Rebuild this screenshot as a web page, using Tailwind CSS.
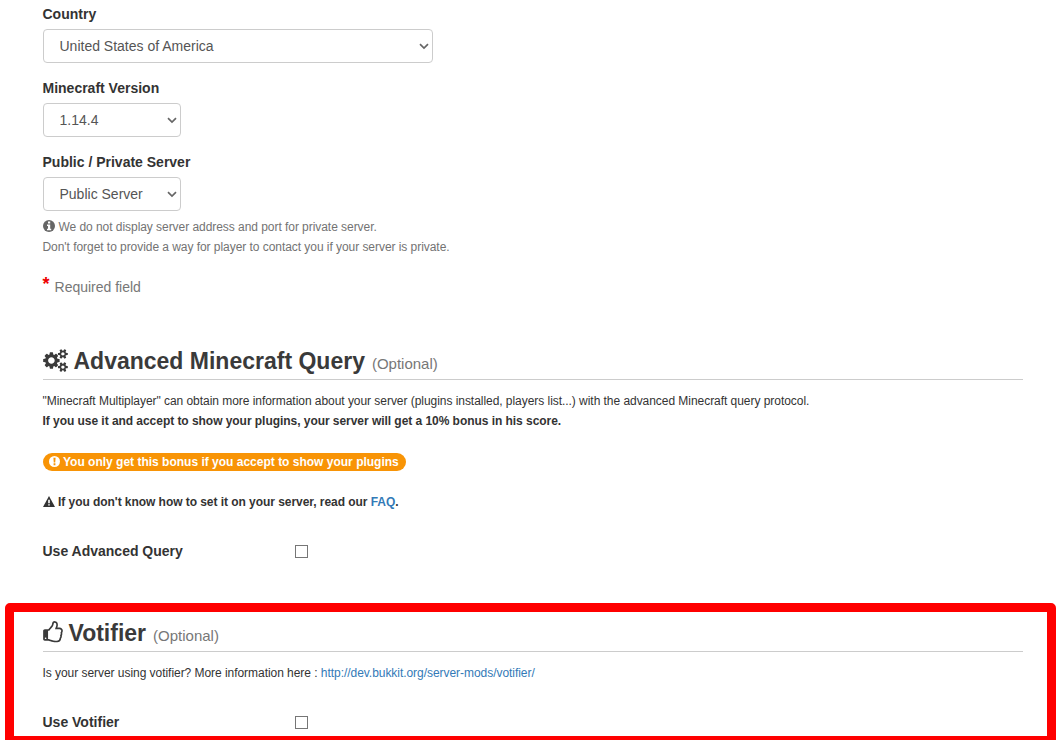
<!DOCTYPE html>
<html lang="en">
<head>
  <meta charset="UTF-8">
  <meta name="viewport" content="width=device-width, initial-scale=1.0">
  <title>Add Server</title>
  <script src="https://cdn.jsdelivr.net/npm/@tailwindcss/browser@4"></script>
</head>
<body class="bg-white text-[#333] h-screen overflow-hidden font-['Liberation_Sans',Arial,sans-serif] text-sm leading-5">

  <form class="pt-1 pl-[42.5px] pr-[37px] h-[603px]">
    <div class="mb-[15px]">
      <label for="country" class="block mb-[5px] font-bold"><span>Country</span></label>
      <div class="relative w-[390px]">
        <select id="country" class="appearance-none block w-full h-[34px] px-4 bg-white border border-[#ccc] rounded text-[#555]">
          <option>United States of America</option>
        </select>
        <svg class="absolute right-1 top-[14px] w-[10px] h-[7px] pointer-events-none" viewBox="0 0 10 7" fill="none" stroke="#666" stroke-width="1.7"><path d="M1 1.2l4 3.8 4-3.8"/></svg>
      </div>
    </div>

    <div class="mb-[15px]">
      <label for="version" class="block mb-[5px] font-bold"><span>Minecraft Version</span></label>
      <div class="relative w-[138px]">
        <select id="version" class="appearance-none block w-full h-[34px] px-4 bg-white border border-[#ccc] rounded text-[#555]">
          <option>1.14.4</option>
        </select>
        <svg class="absolute right-1 top-[14px] w-[10px] h-[7px] pointer-events-none" viewBox="0 0 10 7" fill="none" stroke="#666" stroke-width="1.7"><path d="M1 1.2l4 3.8 4-3.8"/></svg>
      </div>
    </div>

    <div>
      <label for="access" class="block mb-[5px] font-bold"><span>Public / Private Server</span></label>
      <div class="relative w-[138px]">
        <select id="access" class="appearance-none block w-full h-[34px] px-4 bg-white border border-[#ccc] rounded text-[#555]">
          <option>Public Server</option>
        </select>
        <svg class="absolute right-1 top-[14px] w-[10px] h-[7px] pointer-events-none" viewBox="0 0 10 7" fill="none" stroke="#666" stroke-width="1.7"><path d="M1 1.2l4 3.8 4-3.8"/></svg>
      </div>
      <div class="mt-[6px] text-xs leading-5 tracking-[-0.05px] text-[#737373]">
        <p class="flex items-center gap-1">
          <svg class="w-3 h-3 -mt-0.5" viewBox="0 0 12 12"><circle cx="6" cy="6" r="6" fill="#666"/><path d="M5 1.5h2.2v2H5zM4 4.6h3.2v4.2h1v1.4H4V8.8h1V6H4z" fill="#fff"/></svg>
          <span>We do not display server address and port for private server.</span>
        </p>
        <p><span>Don't forget to provide a way for player to contact you if your server is private.</span></p>
      </div>
    </div>

    <p class="mt-5 flex text-[#777]"><span class="mr-[5px] -mt-[3px] text-lg leading-5 font-bold text-[#e00]">*</span><span>Required field</span></p>

    <h2 class="mt-[46px] flex items-center h-[37px] border-b border-[#ccc] text-[23px] leading-9 font-bold text-[#3a3a3a]">
      <svg class="w-[25px] h-[23px] mr-[6px] -mt-0.5" viewBox="0 0 1920 1792" fill="currentColor"><path d="M896 896q0-106-75-181t-181-75-181 75-75 181 75 181 181 75 181-75 75-181zm768 512q0-52-38-90t-90-38-90 38-38 90q0 53 37.5 90.5t90.5 37.5 90.5-37.5 37.5-90.5zm0-1024q0-52-38-90t-90-38-90 38-38 90q0 53 37.5 90.5t90.5 37.5 90.5-37.5 37.5-90.5zm-384 421v185q0 10-7 19.5t-16 10.5l-155 24q-11 35-32 76 34 48 90 115 7 10 7 20 0 12-7 19-23 30-82.5 89.5t-78.5 59.5q-11 0-21-7l-115-90q-37 19-77 31-11 108-23 155-7 24-30 24h-186q-11 0-20-7.5t-10-17.5l-23-153q-34-10-75-31l-118 89q-7 7-20 7-11 0-21-8-144-133-144-160 0-9 7-19 10-14 41-53t47-61q-23-44-35-82l-152-24q-10-1-17-9.5t-7-19.5v-185q0-10 7-19.5t16-10.5l155-24q11-35 32-76-34-48-90-115-7-11-7-20 0-12 7-20 22-30 82-89t79-59q11 0 21 7l115 90q34-18 77-32 11-108 23-154 7-24 30-24h186q11 0 20 7.5t10 17.5l23 153q34 10 75 31l118-89q8-7 20-7 11 0 21 8 144 133 144 160 0 9-7 19-12 16-42 54t-45 60q23 48 34 82l152 23q10 2 17 10.5t7 19.5zm640 533v140q0 16-149 31-12 27-30 52 51 113 51 138 0 4-4 7-122 71-124 71-8 0-46-47t-52-68q-20 2-30 2t-30-2q-14 21-52 68t-46 47q-2 0-124-71-4-3-4-7 0-25 51-138-18-25-30-52-149-15-149-31v-140q0-16 149-31 13-29 30-52-51-113-51-138 0-4 4-7 4-2 35-20t59-34 30-16q8 0 46 46.5t52 67.5q20-2 30-2t30 2q51-71 92-112l6-2q4 0 124 70 4 3 4 7 0 25-51 138 17 23 30 52 149 15 149 31zm0-1024v140q0 16-149 31-12 27-30 52 51 113 51 138 0 4-4 7-122 71-124 71-8 0-46-47t-52-68q-20 2-30 2t-30-2q-14 21-52 68t-46 47q-2 0-124-71-4-3-4-7 0-25 51-138-18-25-30-52-149-15-149-31v-140q0-16 149-31 13-29 30-52-51-113-51-138 0-4 4-7 4-2 35-20t59-34 30-16q8 0 46 46.5t52 67.5q20-2 30-2t30 2q51-71 92-112l6-2q4 0 124 70 4 3 4 7 0 25-51 138 17 23 30 52 149 15 149 31z"/></svg>
      <span>Advanced Minecraft Query</span>
      <small class="ml-[7px] mt-1.5 text-[15px] font-normal text-[#777]">(Optional)</small>
    </h2>

    <div class="mt-[11px] text-xs leading-5 tracking-[-0.045px]">
      <p><span>"Minecraft Multiplayer" can obtain more information about your server (plugins installed, players list...) with the advanced Minecraft query protocol.</span></p>
      <p class="font-bold"><span>If you use it and accept to show your plugins, your server will get a 10% bonus in his score.</span></p>
    </div>

    <div class="mt-[22px] flex items-center w-[363px] h-[18px] pl-[6px] rounded-full bg-[#f89406] text-xs font-bold text-white">
      <svg class="w-[11px] h-[11px] mr-[3.5px] -mt-px" viewBox="0 0 12 12"><circle cx="6" cy="6" r="6" fill="#fff"/><path d="M4.8 2h2.4L6.8 7H5.2zM5 8h2v2H5z" fill="#f89406"/></svg>
      <span>You only get this bonus if you accept to show your plugins</span>
    </div>

    <p class="mt-[21px] flex items-center text-xs leading-5 tracking-[-0.05px] font-bold">
      <svg class="w-3 h-[11px] mr-[3.5px] -mt-px" viewBox="0 0 12 11"><path d="M6 0l6 11H0z" fill="#333"/><path d="M5.2 3.8h1.6v3.4H5.2zM5.2 8.2h1.6v1.4H5.2z" fill="#fff"/></svg>
      <span>If you don't know how to set it on your server, read our <a href="#" class="text-[#337ab7]">FAQ</a>.</span>
    </p>

    <div class="mt-[29px] flex items-center">
      <label for="query" class="w-[252px] font-bold"><span>Use Advanced Query</span></label>
      <input id="query" type="checkbox" class="appearance-none w-[13px] h-[13px] border border-[#767676] bg-white">
    </div>
  </form>

  <section class="ml-[5px] w-[1051px] h-[142px] border-[9px] border-[#f00] rounded-t-[5px] pl-[28.5px] pr-6">
    <h2 class="flex items-center h-10 pt-[3px] border-b border-[#ccc] text-[23px] leading-9 font-bold text-[#3a3a3a]">
      <svg class="w-[20px] h-[23px] mr-[6px] -mt-0.5" viewBox="128 0 1536 1792" fill="currentColor"><path d="M384 1344q0-26-19-45t-45-19-45 19-19 45 19 45 45 19 45-19 19-45zm1152-576q0-51-39-89.5t-89-38.5h-352q0-58 48-159.5t48-160.5q0-98-32-145t-128-47q-26 26-38 85t-30.5 125.5-59.5 109.5q-22 23-77 91-4 5-23 30t-31.5 41-34.5 42.5-40 44-38.5 35.5-40 27-35.5 9h-32v640h32q13 0 31.5 3t33 6.5 38 11 35 11.5 35.5 12.5 29 10.5q211 73 342 73h121q192 0 192-167 0-26-5-56 30-16 47.5-52.5t17.5-73.5-18-69q53-50 53-119 0-25-10-55.5t-25-47.5q32-1 53.5-47t21.5-81zm128-1q0 89-49 163 9 33 9 69 0 77-38 144 3 21 3 43 0 101-60 178 1 139-85 219.5t-227 80.5h-129q-96 0-189.5-22.5t-216.5-65.5q-116-40-138-40h-288q-53 0-90.5-37.5t-37.5-90.5v-640q0-53 37.5-90.5t90.5-37.5h274q36-24 137-155 58-75 107-128 24-25 35.5-85.5t30.5-126.5 62-108q39-37 90-37 84 0 151 32.5t102 101.5 35 186q0 93-48 192h176q104 0 180 76t76 179z"/></svg>
      <span>Votifier</span>
      <small class="ml-[7px] mt-1.5 text-[15px] font-normal text-[#777]">(Optional)</small>
    </h2>
    <p class="mt-[11px] text-xs leading-5 tracking-[-0.045px]"><span>Is your server using votifier? More information here : <a href="#" class="text-[#337ab7]">http://dev.bukkit.org/server-mods/votifier/</a></span></p>
    <div class="mt-[29px] flex items-center">
      <label for="votifier" class="w-[252px] font-bold"><span>Use Votifier</span></label>
      <input id="votifier" type="checkbox" class="appearance-none w-[13px] h-[13px] border border-[#767676] bg-white">
    </div>
  </section>

</body>
</html>
